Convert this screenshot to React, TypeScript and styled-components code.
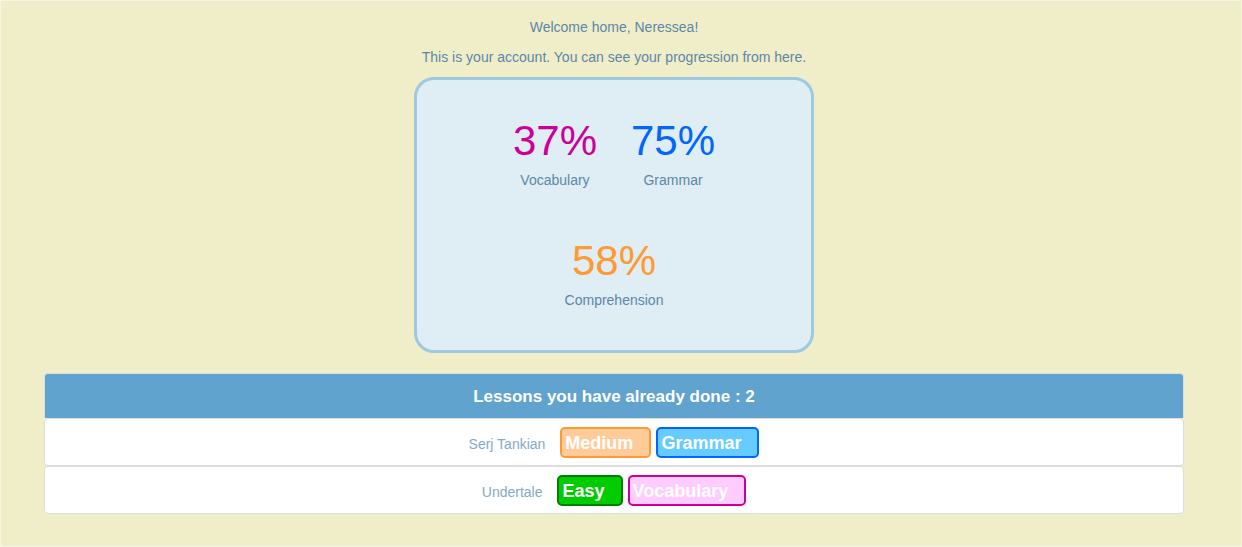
import React from "react";
import styled, { createGlobalStyle } from "styled-components";

const GlobalStyle = createGlobalStyle`
  *, *::before, *::after { box-sizing: border-box; }
  body {
    margin: 0;
    background: #f0eec8;
    color: #5c87a9;
    font: 14px/20px "Liberation Sans", Arial, sans-serif;
  }
`;

const Page = styled.main`
  min-height: 100vh;
  padding: 16px 57px 32px 43px;
  border: 1px solid #f8f6e3;
  text-align: center;
`;

const Intro = styled.p`
  margin: 0 0 10px;
`;

const Progress = styled.section`
  display: flex;
  flex-wrap: wrap;
  justify-content: center;
  max-width: 400px;
  margin: 0 auto 20px;
  padding: 15px 50px;
  border: 3px solid #a0c8e0;
  border-radius: 20px;
  background: #dfedf4;
`;

const Stat = styled.div`
  padding: 15px 17px 27px;
  line-height: 16px;
`;

const Score = styled.div<{ $color: string }>`
  color: ${({ $color }) => $color};
  font-size: 42px;
  line-height: 62px;
`;

const Lessons = styled.section`
  border-radius: 4px;
`;

const LessonsTitle = styled.h2`
  margin: 0;
  padding: 13px 15px 11px;
  border: 1px solid #dddddd;
  border-bottom: 0;
  border-radius: 4px 4px 0 0;
  background: #60a3ce;
  color: #ffffff;
  font-size: 17px;
  line-height: 20px;
`;

const LessonList = styled.ul`
  margin: 0;
  padding: 0;
  list-style: none;
`;

const Lesson = styled.li`
  display: flex;
  align-items: center;
  justify-content: center;
  gap: 5px;
  height: 48px;
  border: 1px solid #dddddd;
  border-radius: 4px;
  background: #ffffff;
`;

const LessonLink = styled.a`
  margin-right: 10px;
  padding-top: 4px;
  color: #85a9c8;
  text-decoration: none;
`;

const Tag = styled.span<{ $fill: string; $edge: string }>`
  padding: 2px 16px 0 3px;
  border: 2px solid ${({ $edge }) => $edge};
  border-radius: 5px;
  background: ${({ $fill }) => $fill};
  color: #ffffff;
  font-size: 18px;
  font-weight: bold;
  line-height: 25px;
`;

const stats = [
  { label: "Vocabulary", value: 37, color: "#cc0099" },
  { label: "Grammar", value: 75, color: "#0066ff" },
  { label: "Comprehension", value: 58, color: "#ff9933" },
];

const tagColors = {
  Easy: { fill: "#00cc00", edge: "#008000" },
  Medium: { fill: "#ffcc99", edge: "#ff9933" },
  Grammar: { fill: "#66ccff", edge: "#0066ff" },
  Vocabulary: { fill: "#ffccff", edge: "#cc0099" },
};

type TagName = keyof typeof tagColors;

const lessons: { title: string; tags: TagName[] }[] = [
  { title: "Serj Tankian", tags: ["Medium", "Grammar"] },
  { title: "Undertale", tags: ["Easy", "Vocabulary"] },
];

export default function App() {
  return (
    <>
      <GlobalStyle />
      <Page>
        <Intro>Welcome home, Neressea!</Intro>
        <Intro>This is your account. You can see your progression from here.</Intro>
        <Progress>
          {stats.map(({ label, value, color }) => (
            <Stat key={label}>
              <Score $color={color}>{value}%</Score>
              <div>{label}</div>
            </Stat>
          ))}
        </Progress>
        <Lessons>
          <LessonsTitle>Lessons you have already done : {lessons.length}</LessonsTitle>
          <LessonList>
            {lessons.map(({ title, tags }) => (
              <Lesson key={title}>
                <LessonLink href="#">{title}</LessonLink>
                {tags.map((tag) => (
                  <Tag key={tag} $fill={tagColors[tag].fill} $edge={tagColors[tag].edge}>
                    {tag}
                  </Tag>
                ))}
              </Lesson>
            ))}
          </LessonList>
        </Lessons>
      </Page>
    </>
  );
}
